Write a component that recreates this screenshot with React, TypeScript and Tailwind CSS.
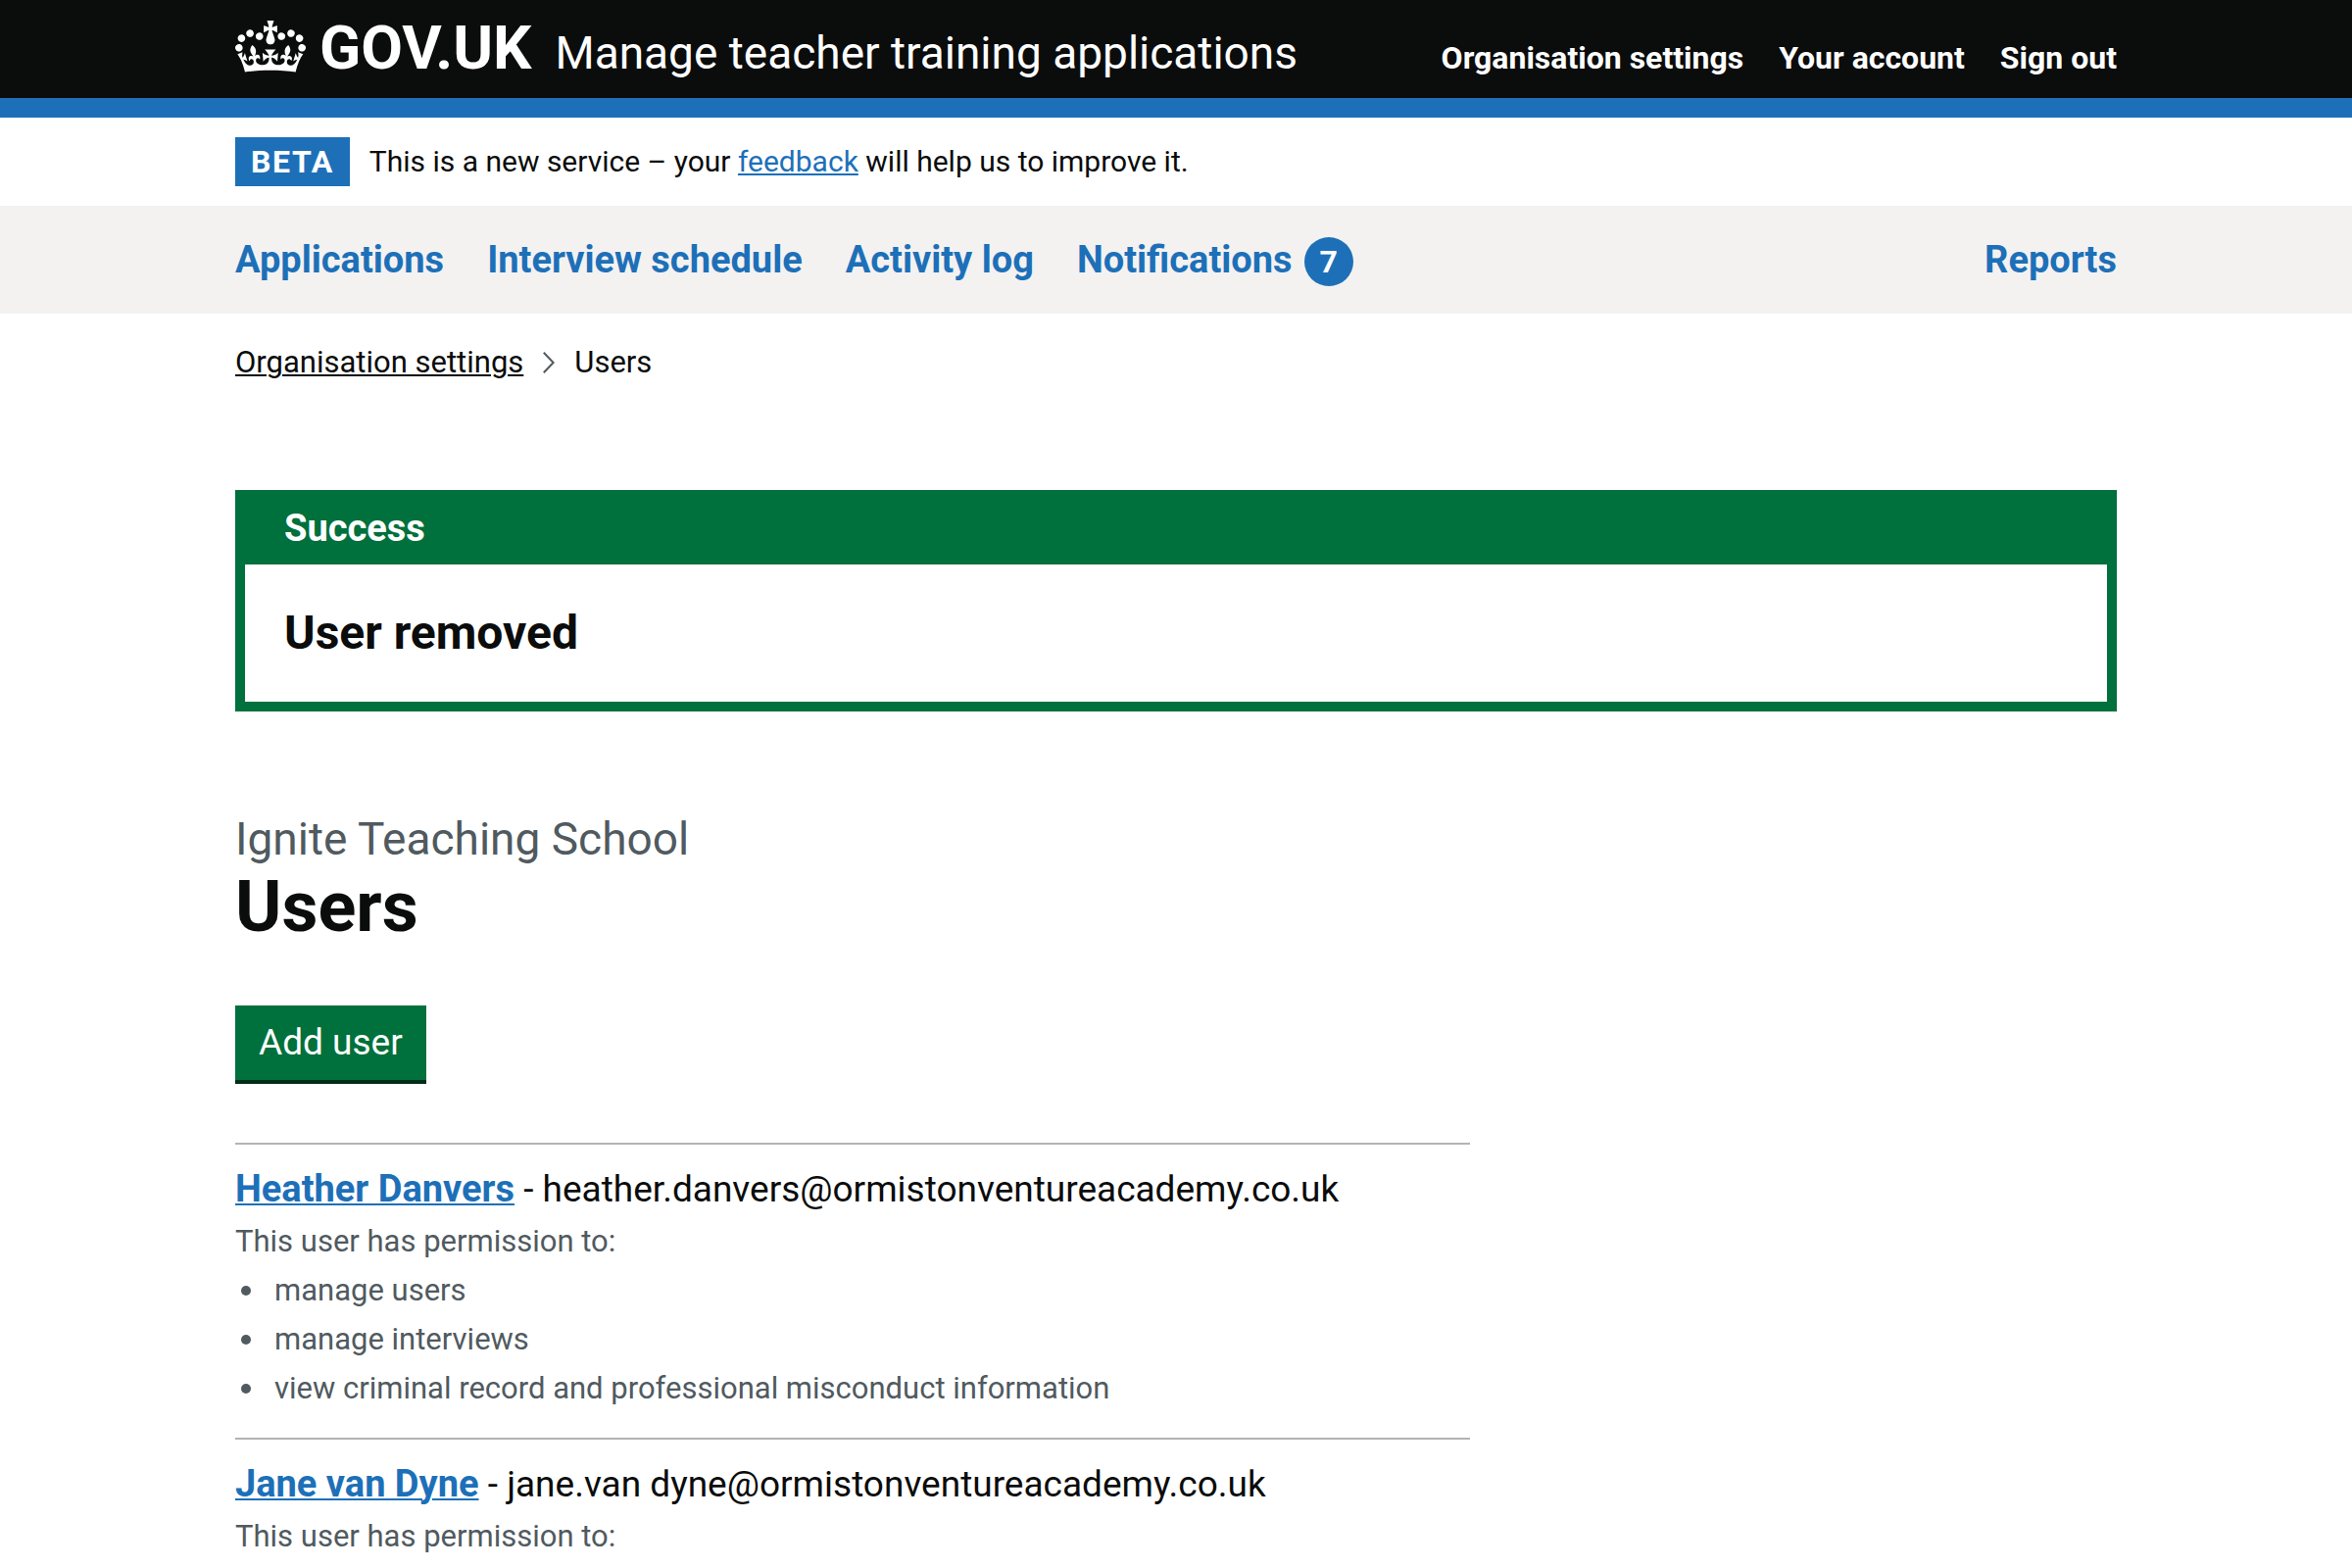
import type { ReactNode } from 'react';

type User = { name: string; email: string; permissions: string[] };

const accountLinks = ['Organisation settings', 'Your account', 'Sign out'];

const primaryLinks: { label: string; count?: number }[] = [
  { label: 'Applications' },
  { label: 'Interview schedule' },
  { label: 'Activity log' },
  { label: 'Notifications', count: 7 },
];

const users: User[] = [
  {
    name: 'Heather Danvers',
    email: 'heather.danvers@ormistonventureacademy.co.uk',
    permissions: [
      'manage users',
      'manage interviews',
      'view criminal record and professional misconduct information',
    ],
  },
  {
    name: 'Jane van Dyne',
    email: 'jane.van dyne@ormistonventureacademy.co.uk',
    permissions: [],
  },
];

function Container({ children }: { children: ReactNode }) {
  return (
    <div className="px-8">
      <div className="mx-auto max-w-[1920px]">{children}</div>
    </div>
  );
}

function Crown() {
  return (
    <svg viewBox="0 0 132 97" className="mt-0.5 h-[53px] w-[72px] shrink-0 self-start" fill="currentColor" aria-hidden="true">
      <path
        fillRule="evenodd"
        d="M25 30.2c3.5 1.5 7.7-.2 9.1-3.7 1.5-3.6-.2-7.8-3.9-9.2-3.6-1.4-7.6.3-9.1 3.9-1.4 3.5.3 7.5 3.9 9zM9 39.5c3.6 1.5 7.8-.2 9.2-3.7 1.5-3.6-.2-7.8-3.9-9.1-3.6-1.5-7.6.2-9.1 3.8-1.4 3.5.3 7.5 3.8 9zM4.4 57.2c3.5 1.5 7.7-.2 9.1-3.8 1.5-3.6-.2-7.7-3.9-9.1-3.5-1.5-7.6.3-9.1 3.8-1.4 3.5.3 7.6 3.9 9.1zm38.3-21.4c3.5 1.5 7.7-.2 9.1-3.8 1.5-3.6-.2-7.7-3.9-9.1-3.6-1.5-7.6.3-9.1 3.8-1.3 3.6.4 7.7 3.9 9.1zm64.4-5.6c-3.6 1.5-7.8-.2-9.1-3.7-1.5-3.6.2-7.8 3.8-9.2 3.6-1.4 7.7.3 9.2 3.9 1.3 3.5-.4 7.5-3.9 9zm15.9 9.3c-3.6 1.5-7.7-.2-9.1-3.7-1.5-3.6.2-7.8 3.7-9.1 3.6-1.5 7.7.2 9.2 3.8 1.5 3.5-.3 7.5-3.8 9zm4.7 17.7c-3.6 1.5-7.8-.2-9.2-3.8-1.5-3.6.2-7.7 3.9-9.1 3.6-1.5 7.7.3 9.2 3.8 1.3 3.5-.4 7.6-3.9 9.1zM89.3 35.8c-3.6 1.5-7.8-.2-9.2-3.8-1.4-3.6.2-7.7 3.9-9.1 3.6-1.5 7.7.3 9.2 3.8 1.4 3.6-.3 7.7-3.9 9.1zM69.7 17.7l8.9 4.7V9.3l-8.9 2.8c-.2-.3-.5-.6-.9-.9L72.4 0H59.6l3.5 11.2c-.3.3-.6.5-.9.9l-8.8-2.8v13.1l8.8-4.7c.3.3.6.7.9.9l-5 15.4v.1c-.2.8-.4 1.6-.4 2.4 0 4.1 3.1 7.5 7 8.1h.2c.3 0 .7.1 1 .1.4 0 .7 0 1-.1h.2c4-.6 7.1-4.1 7.1-8.1 0-.8-.1-1.7-.4-2.4V34l-5.1-15.4c.4-.2.7-.6 1-.9zM66 92.8c16.9 0 32.8 1.1 47.1 3.2 4-16.9 8.9-26.7 14-33.5l-9.6-3.4c1 4.9 1.1 7.2 0 10.2-1.5-1.4-3-4.3-4.2-8.7L108.6 76c2.8-2 5-3.2 7.5-3.3-4.4 9.4-10 11.9-13.6 11.2-4.3-.8-6.3-4.6-5.6-7.9 1-4.7 5.7-5.9 8-.5 4.3-8.7-3-11.4-7.6-8.8 7.1-7.2 7.9-13.5 2.1-21.1-8 6.1-8.1 12.3-4.5 20.8-4.7-5.4-12.1-2.5-9.5 6.2 3.4-5.2 7.9-2 7.2 3.1-.6 4.3-6.4 7.8-13.5 7.2-10.3-.9-10.9-8-11.2-13.8 2.5-.5 7.1 1.8 11 7.3L80.2 60c-4.1 4.4-8 5.3-12.3 5.4 1.4-4.4 8-11.6 8-11.6H55.5s6.4 7.2 7.9 11.6c-4.2-.1-8-1-12.3-5.4l1.4 16.4c3.9-5.5 8.5-7.7 10.9-7.3-.3 5.8-.9 12.8-11.1 13.8-7.2.6-12.9-2.9-13.5-7.2-.7-5 3.8-8.3 7.1-3.1 2.7-8.7-4.6-11.6-9.4-6.2 3.7-8.5 3.6-14.7-4.6-20.8-5.8 7.6-5 13.9 2.2 21.1-4.7-2.6-11.9.1-7.7 8.8 2.3-5.5 7.1-4.2 8.1.5.7 3.3-1.3 7.1-5.7 7.9-3.5.7-9-1.8-13.5-11.2 2.5.1 4.7 1.3 7.5 3.3l-4.7-15.4c-1.2 4.4-2.7 7.2-4.3 8.7-1.1-3-.9-5.3 0-10.2l-9.5 3.4c5 6.9 9.9 16.7 14 33.5 14.8-2.1 30.8-3.2 47.7-3.2z"
      />
    </svg>
  );
}

function Header() {
  return (
    <header className="border-b-20 border-[#1d70b8] bg-[#0b0c0c] text-white">
      <Container>
        <div className="flex flex-wrap items-baseline pt-[19px] pb-4">
          <a href="#" className="mr-6 flex items-baseline gap-[14px] text-[62px] leading-[60px] font-bold">
            <Crown />
            GOV.UK
          </a>
          <a href="#" className="text-[46px] leading-[60px]">
            Manage teacher training applications
          </a>
          <nav aria-label="Account" className="ml-auto">
            <ul className="flex flex-wrap gap-9 text-[32px] leading-[40px] font-bold">
              {accountLinks.map((label) => (
                <li key={label}>
                  <a href="#">{label}</a>
                </li>
              ))}
            </ul>
          </nav>
        </div>
      </Container>
    </header>
  );
}

function PhaseBanner() {
  return (
    <Container>
      <div className="flex items-center gap-5 py-5 text-[30px] leading-[40px]">
        <strong className="bg-[#1d70b8] px-4 py-[5px] text-[32px] tracking-wider text-white">BETA</strong>
        <p>
          This is a new service – your{' '}
          <a href="#" className="text-[#1d70b8] underline decoration-2 underline-offset-2">
            feedback
          </a>{' '}
          will help us to improve it.
        </p>
      </div>
    </Container>
  );
}

function PrimaryNavigation() {
  return (
    <nav aria-label="Primary" className="bg-[#f3f2f1] text-[38px] leading-[50px] font-bold text-[#1d70b8]">
      <Container>
        <ul className="flex flex-wrap gap-11 py-[30px]">
          {primaryLinks.map(({ label, count }) => (
            <li key={label}>
              <a href="#" className="flex items-center gap-3">
                {label}
                {count !== undefined && (
                  <span className="mt-0.5 -mb-0.5 size-[50px] rounded-full bg-[#1d70b8] text-center text-[32px] text-white">
                    {count}
                  </span>
                )}
              </a>
            </li>
          ))}
          <li className="ml-auto">
            <a href="#">Reports</a>
          </li>
        </ul>
      </Container>
    </nav>
  );
}

function Breadcrumbs() {
  return (
    <nav aria-label="Breadcrumb" className="pt-[30px] text-[31px] leading-[40px]">
      <ol className="flex items-center gap-5">
        <li>
          <a href="#" className="underline decoration-2 underline-offset-2">
            Organisation settings
          </a>
        </li>
        <li className="flex items-center gap-5">
          <svg viewBox="0 0 12 22" className="h-[22px] w-3 text-[#505a5f]" fill="none" stroke="currentColor" strokeWidth="2" aria-hidden="true">
            <path d="M0.8 0.7 L10.6 11 L0.8 21.3" />
          </svg>
          Users
        </li>
      </ol>
    </nav>
  );
}

function SuccessBanner() {
  return (
    <section aria-labelledby="banner-title" className="mt-[110px] border-10 border-[#00703c]">
      <h2
        id="banner-title"
        className="bg-[#00703c] px-10 pt-1 pb-3 text-[38px] leading-[50px] font-bold text-white"
      >
        Success
      </h2>
      <p className="p-10 text-[48px] leading-[60px] font-bold">User removed</p>
    </section>
  );
}

function UserItem({ user }: { user: User }) {
  return (
    <section className="border-t-2 border-[#b1b4b6] pt-5 pb-[30px]">
      <h2 className="text-[37px] leading-[50px]">
        <a href="#" className="text-[38px] font-bold text-[#1d70b8] underline decoration-2 underline-offset-2">
          {user.name}
        </a>{' '}
        - {user.email}
      </h2>
      <div className="mt-2 text-[31px] leading-[40px] text-[#505a5f]">
        <p>This user has permission to:</p>
        {user.permissions.length > 0 && (
          <ul className="mt-[10px] flex flex-col gap-[10px] pl-1.5">
            {user.permissions.map((permission) => (
              <li key={permission} className="flex items-center gap-6">
                <span className="size-[10px] shrink-0 rounded-full bg-current" />
                {permission}
              </li>
            ))}
          </ul>
        )}
      </div>
    </section>
  );
}

export default function App() {
  return (
    <div className="min-h-screen bg-white font-[Roboto,sans-serif] text-[#0b0c0c]">
      <Header />
      <PhaseBanner />
      <PrimaryNavigation />
      <Container>
        <Breadcrumbs />
        <main>
          <SuccessBanner />
          <h1 className="mt-[100px] text-[72px] leading-[80px] font-bold">
            <span className="block text-[46px] leading-[60px] font-normal text-[#505a5f]">
              Ignite Teaching School
            </span>
            Users
          </h1>
          <button
            type="button"
            className="mt-[60px] mb-16 block bg-[#00703c] px-6 py-4 text-[37px] leading-[44px] text-white shadow-[0_4px_0_#002d18]"
          >
            Add user
          </button>
          <div className="max-w-[1260px]">
            {users.map((user) => (
              <UserItem key={user.name} user={user} />
            ))}
          </div>
        </main>
      </Container>
    </div>
  );
}
